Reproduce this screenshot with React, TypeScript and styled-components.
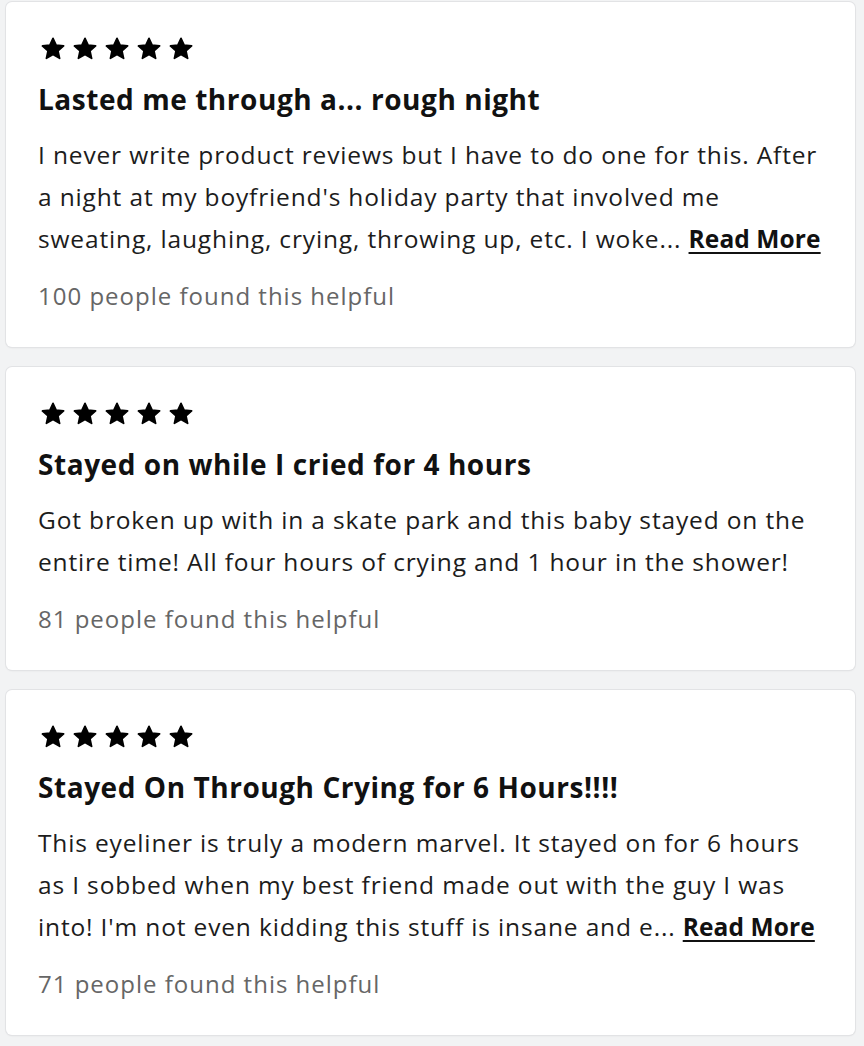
import React from 'react';
import styled, { createGlobalStyle } from 'styled-components';

const GlobalStyle = createGlobalStyle`
    html, body {
        margin: 0;
        padding: 0;
        background: #f2f3f4;
    }
    body {
        font-family: "Open Sans", Lato, sans-serif;
        color: #111;
    }
`;

const List = styled.div`
    display: flex;
    flex-direction: column;
    gap: 20px;
    padding: 2px 9px 10px 6px;
`;

const Card = styled.div`
    background: #fff;
    border-radius: 6px;
    box-shadow: 0 0 0 1px #e2e3e5, 0 1px 2px rgba(0, 0, 0, 0.08);
    padding: 34px 32px 36px 32px;
`;

const Stars = styled.div`
    display: flex;
    gap: 6px;
    height: 26px;
    margin-left: 2px;
`;

const Title = styled.h3`
    margin: 20px 0 0 0;
    font-size: 28px;
    line-height: 34px;
    font-weight: 700;
    letter-spacing: 0.55px;
    color: #111;
`;

const Body = styled.p`
    margin: 18px 0 0 0;
    font-size: 24.5px;
    line-height: 42px;
    letter-spacing: 0.85px;
    color: #1c1c1c;
    white-space: nowrap;
`;

const Line = styled.span`
    display: block;
`;

const ReadMore = styled.a`
    font-weight: 700;
    color: #111;
    letter-spacing: 0.1px;
    text-decoration: underline;
    text-underline-offset: 4px;
    text-decoration-thickness: 2px;
`;

const Helpful = styled.div`
    margin-top: 21px;
    font-size: 24px;
    line-height: 30px;
    letter-spacing: 1px;
    color: #666;
`;

const Star = () => (
    <svg width="26" height="26" viewBox="0 0 24 24">
        <path
            d="M12 2.2l2.9 6.3 6.9.7-5.2 4.6 1.5 6.8L12 17.1l-6.1 3.5 1.5-6.8-5.2-4.6 6.9-.7z"
            fill="#000"
            stroke="#000"
            strokeWidth="1.6"
            strokeLinejoin="round"
        />
    </svg>
);

interface IReview {
    title: string;
    lines: string[];
    more: boolean;
    helpful: number;
}

const reviews: IReview[] = [
    {
        title: 'Lasted me through a... rough night',
        lines: [
            'I never write product reviews but I have to do one for this. After',
            "a night at my boyfriend's holiday party that involved me",
            'sweating, laughing, crying, throwing up, etc. I woke...',
        ],
        more: true,
        helpful: 100,
    },
    {
        title: 'Stayed on while I cried for 4 hours',
        lines: [
            'Got broken up with in a skate park and this baby stayed on the',
            'entire time! All four hours of crying and 1 hour in the shower!',
        ],
        more: false,
        helpful: 81,
    },
    {
        title: 'Stayed On Through Crying for 6 Hours!!!!',
        lines: [
            'This eyeliner is truly a modern marvel. It stayed on for 6 hours',
            'as I sobbed when my best friend made out with the guy I was',
            "into! I'm not even kidding this stuff is insane and e...",
        ],
        more: true,
        helpful: 71,
    },
];

const App = () => {
    return (
        <>
            <GlobalStyle />
            <List>
                {reviews.map((r, i) => (
                    <Card key={i}>
                        <Stars>
                            {[0, 1, 2, 3, 4].map((s) => <Star key={s} />)}
                        </Stars>
                        <Title>{r.title}</Title>
                        <Body>
                            {r.lines.map((l, j) => (
                                <Line key={j}>
                                    {l}
                                    {r.more && j === r.lines.length - 1 && (
                                        <> <ReadMore href="#">Read More</ReadMore></>
                                    )}
                                </Line>
                            ))}
                        </Body>
                        <Helpful>{r.helpful} people found this helpful</Helpful>
                    </Card>
                ))}
            </List>
        </>
    );
};

export default App;
